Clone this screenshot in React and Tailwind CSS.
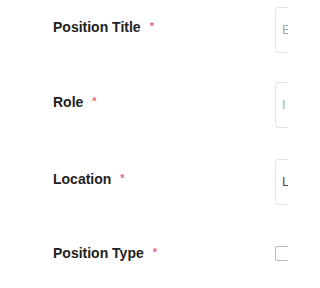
export default function App() {
  const label = "text-[14px] font-bold text-[#222222] w-[222px] shrink-0 flex items-start";
  const star = <span className="ml-[9px] text-[11px] text-[#e2697a] relative top-[1px]">*</span>;
  const input = "h-[46px] w-[13px] shrink-0 border-y border-l border-[#e4e4e4] rounded-l-[4px] flex items-center pl-[6px] text-[13px] overflow-hidden";
  return (
    <div className="w-[288px] h-[288px] overflow-hidden bg-white pt-[7px] pl-[53px]" style={{ fontFamily: '"Liberation Sans", Arial, sans-serif' }}>
      <div className="flex items-center h-[46px] mb-[29px]">
        <div className={label + " mb-[6px]"}>Position Title{star}</div>
        <div className={input + " text-[#a8a8a8]"}>E</div>
      </div>
      <div className="flex items-center h-[46px] mb-[31px]">
        <div className={label + " mb-[6px]"}>Role{star}</div>
        <div className={input + " text-[#a8a8a8]"}>I</div>
      </div>
      <div className="flex items-center h-[46px] mb-[25px]">
        <div className={label + " mb-[6px]"}>Location{star}</div>
        <div className={input + " text-[#5a4444]"}>L</div>
      </div>
      <div className="flex items-center h-[46px]">
        <div className={label}>Position Type{star}</div>
        <div className="w-[15px] h-[15px] shrink-0 border border-[#b8b8b8] rounded-[2px]"></div>
      </div>
    </div>
  );
}
